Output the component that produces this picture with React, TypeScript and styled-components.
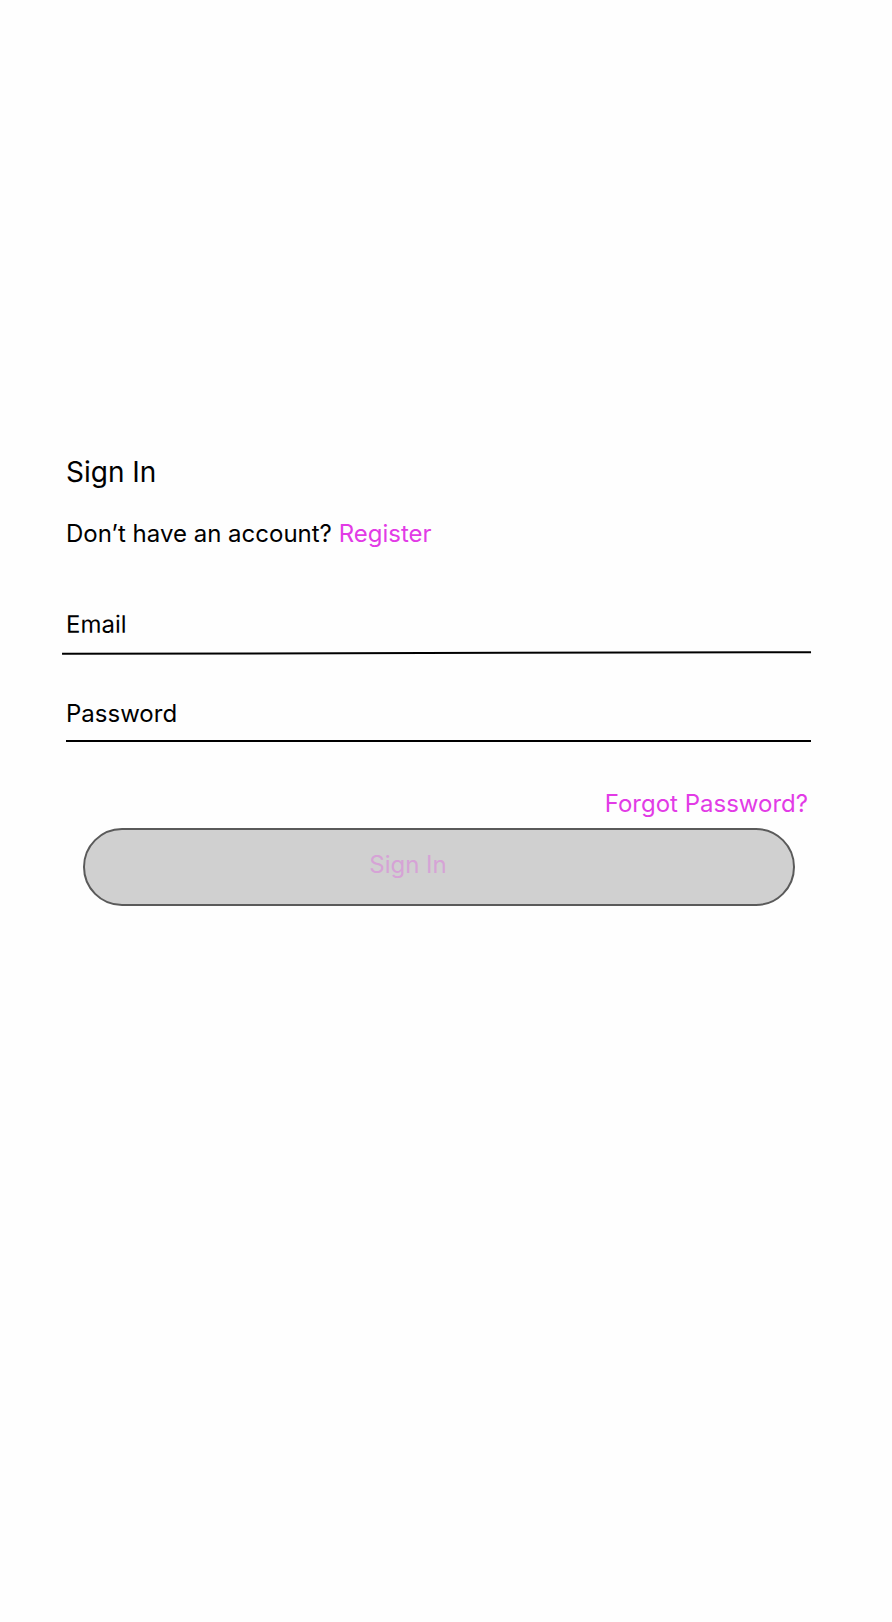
import React from "react";
import styled, { createGlobalStyle } from "styled-components";

const GlobalStyle = createGlobalStyle`
    html, body {
        margin: 0;
        padding: 0;
        background: #fefefe;
    }
    body {
        font-family: "Inter", "Noto Sans", sans-serif;
        color: #000;
    }
`;

const Page = styled.div`
    min-height: 1622px;
    padding: 456px 81px 0 66px;
    box-sizing: border-box;
`;

const Title = styled.h1`
    margin: 0;
    font-size: 28px;
    line-height: 32px;
    font-weight: 400;
`;

const Subtitle = styled.p`
    margin: 33px 0 0;
    font-size: 24px;
    line-height: 26px;
`;

const Link = styled.a`
    color: #e23be6;
    text-decoration: none;
    cursor: pointer;
`;

const Input = styled.input<{ $gap: number; $tilt?: boolean }>`
    display: block;
    width: 100%;
    box-sizing: border-box;
    margin: 0;
    padding: 0 0 ${(p) => p.$gap}px 0;
    border: none;
    border-bottom: 2px solid #000;
    background: transparent;
    font-family: inherit;
    font-size: 24px;
    line-height: 26px;
    outline: none;
    transform: ${(p) => (p.$tilt ? "rotate(-0.12deg)" : "none")};

    &::placeholder {
        color: #000;
        opacity: 1;
    }
`;

const EmailWrap = styled.div`
    margin: 64px 0 0 -4px;
    & > input {
        padding-left: 4px;
    }
`;

const PasswordWrap = styled.div`
    margin-top: 47px;
`;

const ForgotRow = styled.div`
    display: flex;
    justify-content: flex-end;
    margin: 49px 3px 0 0;
    font-size: 24px;
    line-height: 26px;
`;

const SubmitButton = styled.button`
    display: block;
    width: calc(100% - 33px);
    height: 78px;
    margin: 11px 16px 0 17px;
    padding: 0 62px 4px 0;
    box-sizing: border-box;
    border: 2px solid #5a5a5a;
    border-radius: 39px;
    background: #d0d0d0;
    color: #d6a3d6;
    font-family: inherit;
    font-size: 24px;
    line-height: 26px;
`;

const App = () => {
    return (
        <>
            <GlobalStyle />
            <Page>
                <Title>Sign In</Title>
                <Subtitle>
                    Don’t have an account? <Link>Register</Link>
                </Subtitle>
                <EmailWrap>
                    <Input type="email" placeholder="Email" $gap={15} $tilt />
                </EmailWrap>
                <PasswordWrap>
                    <Input type="password" placeholder="Password" $gap={13} />
                </PasswordWrap>
                <ForgotRow>
                    <Link>Forgot Password?</Link>
                </ForgotRow>
                <SubmitButton disabled>Sign In</SubmitButton>
            </Page>
        </>
    );
};

export default App;
